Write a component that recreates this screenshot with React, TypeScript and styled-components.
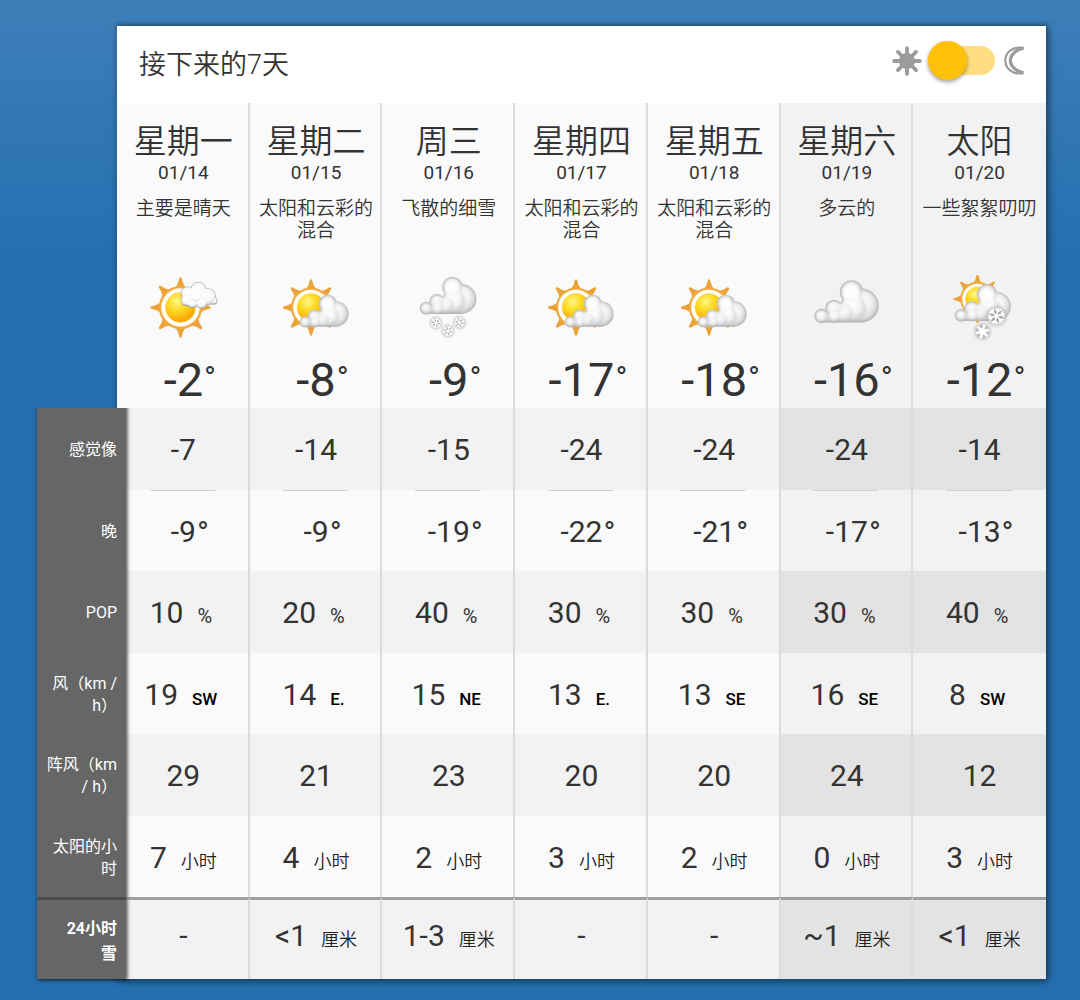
import React, { useState } from "react";
import styled, { createGlobalStyle, css } from "styled-components";

const GlobalStyle = createGlobalStyle`
  *, *::before, *::after { box-sizing: border-box; }
  body {
    margin: 0;
    background: #256fb0 linear-gradient(#3e7fb9, #256fb0 260px) no-repeat;
    color: #333;
    font-family: Roboto, "Noto Sans CJK SC", sans-serif;
  }
`;

const CARD_SHADOW = "2px 2px 8px rgba(0, 0, 0, 0.55)";
const LABEL_WIDTH = 80;

const Page = styled.main`
  min-height: 100vh;
  padding: 0 34px 21px 37px;
`;

const PreviousPanel = styled.div`
  margin: 0 0 26px ${LABEL_WIDTH}px;
  box-shadow: 0 0 4px 1px rgba(0, 0, 0, 0.5);
`;

const Card = styled.section`
  margin-left: ${LABEL_WIDTH}px;
  background: #fff;
  box-shadow: ${CARD_SHADOW};
`;

const CardHeader = styled.header`
  display: flex;
  align-items: center;
  justify-content: space-between;
  height: 77px;
  padding: 0 22px;
`;

const Title = styled.h2`
  margin: 0;
  font-size: 27px;
  font-weight: 350;
  line-height: 40px;
`;

const ThemeSwitch = styled.label`
  display: flex;
  align-items: center;
  gap: 6px;
  padding-bottom: 8px;
  color: #9b9b9b;
`;

const SwitchInput = styled.input`
  appearance: none;
  display: flex;
  align-items: center;
  width: 67px;
  height: 29px;
  margin: 0 3px 0 0;
  border-radius: 15px;
  background: #ffdd80;
  cursor: pointer;

  &::before {
    content: "";
    flex: none;
    width: 39px;
    height: 39px;
    border-radius: 50%;
    background: #ffc107;
    box-shadow: 0 2px 4px rgba(0, 0, 0, 0.4);
  }
  &:checked { justify-content: flex-end; }
`;

const Table = styled.table`
  width: calc(100% + ${LABEL_WIDTH}px);
  margin-left: -${LABEL_WIDTH}px;
  border-collapse: separate;
  border-spacing: 0;
  table-layout: fixed;
`;

const LabelCol = styled.col`
  width: ${LABEL_WIDTH}px;
`;

const columnEdge = css`
  border-right: 2px solid #dcdcdc;
  padding-left: 2px;
  &:last-child { border-right: 0; padding-left: 0; }
`;

const DayHead = styled.th<{ $weekend: boolean }>`
  padding: 19px 0 3px;
  background: ${(p) => (p.$weekend ? "#f2f2f2" : "#fafafa")};
  font-weight: 400;
  vertical-align: top;
  ${columnEdge}
`;

const DayName = styled.div`
  font-size: 33px;
  font-weight: 350;
  line-height: 40px;
`;

const DayDate = styled.div`
  font-size: 19px;
  line-height: 22px;
`;

const Condition = styled.div`
  height: 44px;
  margin: 14px 6px 30px;
  font-size: 19px;
  font-weight: 350;
  line-height: 22px;
`;

const WeatherSvg = styled.svg`
  display: block;
  width: 70px;
  height: 70px;
  margin: 0 auto 13px;
`;

const High = styled.div`
  font-size: 47px;
  line-height: 50px;
`;

const Degree = styled.span<{ $large?: boolean }>`
  display: inline-block;
  width: 0;
  font-size: 32px;
  line-height: 32px;
  text-indent: 1px;
  vertical-align: ${(p) => (p.$large ? "7px" : "-2px")};
`;

const DataRow = styled.tr<{ $summary: boolean }>`
  height: 82px;
  &:nth-child(even) { height: 81px; }
  ${(p) =>
    p.$summary &&
    css`
      > * { border-top: 3px solid #a0a0a0; }
      > th { border-top-color: #4c4c4c; }
      > td { padding-bottom: 10px; }
    `}
`;

const RowLabel = styled.th<{ $summary: boolean }>`
  position: relative;
  z-index: 1;
  padding: 2px 0 0 ${(p) => (p.$summary ? 24 : 8)}px;
  color: #fff;
  font-size: 16px;
  font-weight: ${(p) => (p.$summary ? 700 : 400)};
  line-height: ${(p) => (p.$summary ? 25 : 22)}px;
  text-align: right;

  &::before {
    content: "";
    position: absolute;
    z-index: -1;
    inset: -6px -9px -6px 0;
    background: #666;
    box-shadow: 1px 1px 4px rgba(0, 0, 0, 0.8);
    clip-path: inset(6px -6px 6px -4px);
  }
  ${(p) =>
    p.$summary &&
    css`
      &::before {
        inset: -3px -9px 0 0;
        border-top: 3px solid #4c4c4c;
        clip-path: inset(0 -6px -6px -4px);
      }
    `}
`;

const Cell = styled.td<{ $weekend: boolean; $shaded: boolean }>`
  padding: 2px 0 0;
  background: ${(p) =>
    p.$shaded ? (p.$weekend ? "#e3e3e3" : "#f2f2f2") : p.$weekend ? "#f2f2f2" : "#fafafa"};
  font-size: 30px;
  line-height: 36px;
  text-align: center;
  white-space: nowrap;
  ${columnEdge}
`;

const NightCell = styled(Cell)`
  background-image: linear-gradient(#d0d0d0, #d0d0d0);
  background-size: 50% 1px;
  background-position: top center;
  background-repeat: no-repeat;
`;

type UnitStyle = "percent" | "direction" | "word";

const UNIT_STYLES = {
  percent: css`
    color: #333;
    font-size: 20px;
    margin-right: 5px;
  `,
  direction: css`
    color: #000;
    font-size: 17px;
    font-weight: 500;
    margin-right: 5px;
  `,
  word: css`
    color: #222;
    font-size: 18px;
    font-weight: 350;
  `,
};

const Unit = styled.span<{ $kind: UnitStyle }>`
  margin-left: 14px;
  line-height: 0;
  ${(p) => UNIT_STYLES[p.$kind]}
`;

type Kind = "mostlySunny" | "mix" | "flurries" | "cloudy" | "sunSnow";

function Gradients() {
  return (
    <svg width="0" height="0" style={{ display: "block" }} aria-hidden="true">
      <defs>
        <radialGradient id="disc" cx="38%" cy="30%" r="75%">
          <stop offset="0" stopColor="#fff88a" />
          <stop offset=".4" stopColor="#fddb22" />
          <stop offset="1" stopColor="#f79a00" />
        </radialGradient>
        <radialGradient id="lobe" cx="45%" cy="40%" r="60%">
          <stop offset="0" stopColor="#ffffff" />
          <stop offset=".5" stopColor="#f4f4f5" />
          <stop offset=".8" stopColor="#dfdfe1" />
          <stop offset="1" stopColor="#c8c8ca" />
        </radialGradient>
        <radialGradient id="puff" cx="45%" cy="38%" r="62%">
          <stop offset="0" stopColor="#ffffff" />
          <stop offset=".7" stopColor="#f7f7f8" />
          <stop offset="1" stopColor="#d3d3d5" />
        </radialGradient>
        <radialGradient id="glow">
          <stop offset="0" stopColor="#7d7d7d" stopOpacity=".8" />
          <stop offset=".6" stopColor="#9d9d9d" stopOpacity=".6" />
          <stop offset="1" stopColor="#c8c8c8" stopOpacity="0" />
        </radialGradient>
        <filter id="soften" x="-10%" y="-10%" width="120%" height="120%">
          <feGaussianBlur stdDeviation=".7" />
        </filter>
        <filter id="blend" x="-10%" y="-10%" width="120%" height="120%">
          <feGaussianBlur stdDeviation="1.2" />
        </filter>
      </defs>
    </svg>
  );
}

function Sun({ x, y, s }: { x: number; y: number; s: number }) {
  return (
    <g transform={`translate(${x} ${y}) scale(${s})`}>
      {[0, 45, 90, 135, 180, 225, 270, 315].map((a) => (
        <path key={a} d="M-5.6 -19 Q-2.2 -23.500 -1 -30 H1 Q2.2 -23.500 5.600 -19Z" fill="#eba238" transform={`rotate(${a})`} />
      ))}
      <circle r="20.4" fill="#fffdf6" stroke="#f0aa40" strokeWidth="2.4" />
      <circle r="15" fill="url(#disc)" stroke="#ffd766" strokeWidth=".8" />
    </g>
  );
}

const BIG_LOBES = [
  [48.5, 25.5, 16.5],
  [40, 28, 13.5],
  [38, 12, 11.5],
  [30, 32, 10],
  [20.5, 28.5, 8.5],
  [21, 36, 6.6],
  [8, 36, 7],
];

function Cloud({ x, y, s }: { x: number; y: number; s: number }) {
  return (
    <g transform={`translate(${x} ${y}) scale(${s})`}>
      <g fill="#aeafb1">
        {BIG_LOBES.map(([cx, cy, r]) => (
          <circle key={cx} cx={cx} cy={cy} r={r + 0.2} />
        ))}
        <path d="M8 35H50V42.5H8Z" />
      </g>
      <g filter="url(#blend)">
        <path d="M9 33H50V40.500H9Z" fill="#d6d6d8" />
        {BIG_LOBES.map(([cx, cy, r]) => (
          <circle key={cx} cx={cx} cy={cy} r={r - 0.9} fill="url(#lobe)" />
        ))}
        <ellipse cx="38" cy="16" rx="8.500" ry="10" fill="#fff" opacity=".8" />
        <ellipse cx="29" cy="29" rx="9" ry="6" fill="#f4f4f5" opacity=".6" />
      </g>
    </g>
  );
}

const PUFFS = [
  [6, 11, 6.5],
  [17, 8, 8],
  [32, 18.5, 3.6],
  [26, 14.5, 8.2],
  [5, 18, 5.5],
  [11, 19.5, 6],
  [20, 20.5, 5.6],
  [14, 13, 6.5],
];

function SmallCloud({ x, y }: { x: number; y: number }) {
  return (
    <g transform={`translate(${x} ${y})`}>
      <g fill="#a8a8aa">
        {PUFFS.map(([cx, cy, r]) => (
          <circle key={cx} cx={cx} cy={cy + 0.3} r={r + 0.3} />
        ))}
      </g>
      <g filter="url(#soften)">
        {PUFFS.map(([cx, cy, r]) => (
          <circle key={cx} cx={cx} cy={cy} r={r - 0.4} fill="url(#puff)" />
        ))}
        <ellipse cx="14" cy="12" rx="9" ry="6" fill="#fff" opacity=".6" />
      </g>
    </g>
  );
}

function Flake({ x, y, r, w = 1.4 }: { x: number; y: number; r: number; w?: number }) {
  return (
    <g transform={`translate(${x} ${y})`} stroke="#fff" strokeWidth={w} strokeLinecap="round" fill="none">
      <circle r={r * 1.6} fill="url(#glow)" stroke="none" />
      {[15, 75, 135, 195, 255, 315].map((a) => (
        <path
          key={a}
          transform={`rotate(${a})`}
          d={`M0 0V${-r}M${-r * 0.32} ${-r * 0.9}L0 ${-r * 0.58}L${r * 0.32} ${-r * 0.9}`}
        />
      ))}
    </g>
  );
}

function StarFlake({ x, y, r }: { x: number; y: number; r: number }) {
  return (
    <g transform={`translate(${x} ${y})`} stroke="#fff" strokeWidth="2.6" fill="none">
      <circle r={r * 1.5} fill="url(#glow)" stroke="none" />
      {[15, 75, 135, 195, 255, 315].map((a) => (
        <path key={a} transform={`rotate(${a})`} d={`M0 0V${-r}`} />
      ))}
      <circle r={r * 0.5} fill="#fff" stroke="none" />
    </g>
  );
}

function WeatherIcon({ kind, label }: { kind: Kind; label: string }) {
  return (
    <WeatherSvg viewBox="0 0 70 70" role="img" aria-label={label}>
      {kind === "mostlySunny" && (
        <>
          <Sun x={32.5} y={35.5} s={1} />
          <SmallCloud x={33.5} y={10} />
        </>
      )}
      {kind === "mix" && (
        <>
          <Sun x={30} y={35.5} s={0.93} />
          <Cloud x={18} y={22.5} s={0.76} />
        </>
      )}
      {kind === "flurries" && (
        <>
          <Flake x={22} y={51} r={5} w={1.1} />
          <Flake x={34} y={59} r={5} w={1.1} />
          <Flake x={45.5} y={50.5} r={5} w={1.1} />
          <Cloud x={5} y={4.5} s={0.88} />
        </>
      )}
      {kind === "cloudy" && <Cloud x={1.5} y={8} s={1} />}
      {kind === "sunSnow" && (
        <>
          <Sun x={32.5} y={27} s={0.8} />
          <Cloud x={9} y={12} s={0.87} />
          <Flake x={51.5} y={44} r={8} w={1.7} />
          <StarFlake x={37.5} y={59.5} r={7} />
        </>
      )}
    </WeatherSvg>
  );
}

function SunGlyph() {
  return (
    <svg width="30" height="30" viewBox="0 0 30 30" aria-hidden="true">
      <circle cx="15" cy="15" r="8" fill="currentColor" />
      {[0, 45, 90, 135, 180, 225, 270, 315].map((a) => (
        <path key={a} d="M15 6.5V2.2" stroke="currentColor" strokeWidth="3.8" strokeLinecap="round" transform={`rotate(${a} 15 15)`} />
      ))}
    </svg>
  );
}

function MoonGlyph() {
  return (
    <svg width="20" height="29" viewBox="0 0 20 29" fill="none" stroke="currentColor" aria-hidden="true">
      <path d="M19.500 1.900C8 0 1.300 7 1.300 14.500S8 29 19.500 27.100" strokeWidth="2.200" />
      <path d="M19.500 2.300C11 4 6.300 9.500 6.300 14.500S11 25 19.500 26.700" strokeWidth="3.200" />
    </svg>
  );
}

const DAYS: { name: string; date: string; text: string; kind: Kind; high: string; weekend: boolean }[] = [
  { name: "星期一", date: "01/14", text: "主要是晴天", kind: "mostlySunny", high: "-2", weekend: false },
  { name: "星期二", date: "01/15", text: "太阳和云彩的混合", kind: "mix", high: "-8", weekend: false },
  { name: "周三", date: "01/16", text: "飞散的细雪", kind: "flurries", high: "-9", weekend: false },
  { name: "星期四", date: "01/17", text: "太阳和云彩的混合", kind: "mix", high: "-17", weekend: false },
  { name: "星期五", date: "01/18", text: "太阳和云彩的混合", kind: "mix", high: "-18", weekend: false },
  { name: "星期六", date: "01/19", text: "多云的", kind: "cloudy", high: "-16", weekend: true },
  { name: "太阳", date: "01/20", text: "一些絮絮叨叨", kind: "sunSnow", high: "-12", weekend: true },
];

type Row = {
  label: string;
  values: string[];
  units?: string[];
  unit?: string;
  unitStyle?: UnitStyle;
  degree?: boolean;
  summary?: boolean;
};

const ROWS: Row[] = [
  { label: "感觉像", values: ["-7", "-14", "-15", "-24", "-24", "-24", "-14"] },
  { label: "晚", values: ["-9", "-9", "-19", "-22", "-21", "-17", "-13"], degree: true },
  { label: "POP", values: ["10", "20", "40", "30", "30", "30", "40"], unit: "%", unitStyle: "percent" },
  {
    label: "风（km / h）",
    values: ["19", "14", "15", "13", "13", "16", "8"],
    units: ["SW", "E.", "NE", "E.", "SE", "SE", "SW"],
    unitStyle: "direction",
  },
  { label: "阵风（km / h）", values: ["29", "21", "23", "20", "20", "24", "12"] },
  { label: "太阳的小时", values: ["7", "4", "2", "3", "2", "0", "3"], unit: "小时" },
  { label: "24小时雪", values: ["-", "<1", "1-3", "-", "-", "~1", "<1"], unit: "厘米", summary: true },
];

export default function App() {
  const [night, setNight] = useState(false);
  return (
    <>
      <GlobalStyle />
      <Gradients />
      <Page>
        <PreviousPanel />
        <Card>
          <CardHeader>
            <Title>接下来的7天</Title>
            <ThemeSwitch>
              <SunGlyph />
              <SwitchInput
                type="checkbox"
                role="switch"
                aria-label="白天 / 夜晚"
                checked={night}
                onChange={(e) => setNight(e.target.checked)}
              />
              <MoonGlyph />
            </ThemeSwitch>
          </CardHeader>
          <Table>
            <colgroup>
              <LabelCol />
              {DAYS.map((d) => (
                <col key={d.date} />
              ))}
            </colgroup>
            <thead>
              <tr>
                <td />
                {DAYS.map((d) => (
                  <DayHead key={d.date} scope="col" $weekend={d.weekend}>
                    <DayName>{d.name}</DayName>
                    <DayDate>{d.date}</DayDate>
                    <Condition>{d.text}</Condition>
                    <WeatherIcon kind={d.kind} label={d.text} />
                    <High>
                      {d.high}
                      <Degree $large>°</Degree>
                    </High>
                  </DayHead>
                ))}
              </tr>
            </thead>
            <tbody>
              {ROWS.map((row, r) => {
                const ValueCell = row.degree ? NightCell : Cell;
                return (
                  <DataRow key={row.label} $summary={!!row.summary}>
                    <RowLabel scope="row" $summary={!!row.summary}>
                      {row.label}
                    </RowLabel>
                    {row.values.map((value, i) => {
                      const unit = row.units ? row.units[i] : row.unit;
                      return (
                        <ValueCell key={DAYS[i].date} $weekend={DAYS[i].weekend} $shaded={r % 2 === 0}>
                          {value}
                          {row.degree && <Degree>°</Degree>}
                          {unit && value !== "-" && <Unit $kind={row.unitStyle ?? "word"}>{unit}</Unit>}
                        </ValueCell>
                      );
                    })}
                  </DataRow>
                );
              })}
            </tbody>
          </Table>
        </Card>
      </Page>
    </>
  );
}
